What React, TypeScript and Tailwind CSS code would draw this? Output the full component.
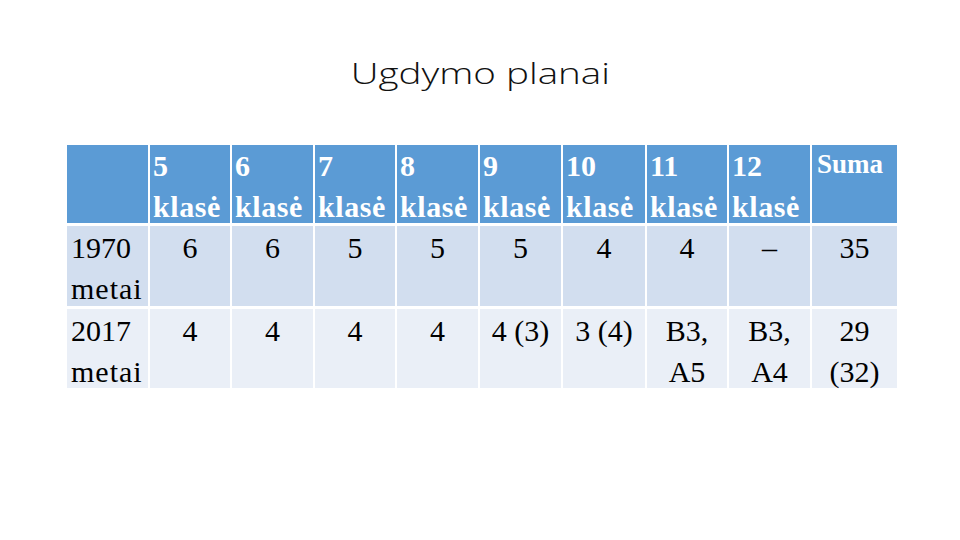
import React from "react";

const serif = { fontFamily: '"Liberation Serif", "Times New Roman", serif' };

const classes = ["5", "6", "7", "8", "9", "10", "11", "12"];
const row1 = ["6", "6", "5", "5", "5", "4", "4", "–", "35"];
const row2: string[][] = [["4"], ["4"], ["4"], ["4"], ["4 (3)"], ["3 (4)"], ["B3,", "A5"], ["B3,", "A4"], ["29", "(32)"]];

export default function App() {
  return (
    <div className="w-[960px] h-[540px] bg-white relative overflow-hidden">
      <div className="pt-[53px] h-[145px] flex justify-center">
        <h1
          className="text-[29px] font-light text-[#111] leading-[40px] scale-x-[1.33]"
          style={{ fontFamily: '"Open Sans", Lato, sans-serif' }}
        >
          Ugdymo planai
        </h1>
      </div>
      <div
        className="ml-[67px] grid grid-cols-[81px_80px_81px_80px_81px_81px_82px_80px_81px_85px] grid-rows-[78px_80px_79px] gap-x-[2px] gap-y-[3px] text-black"
        style={serif}
      >
        <div className="bg-[#5b9bd5]" />
        {classes.map((c) => (
          <div key={c} className="bg-[#5b9bd5] pl-[3px] pt-[0px] text-white font-bold text-[30px] leading-[41px] whitespace-nowrap">
            <div>{c}</div>
            <div className="tracking-[0.6px]">klasė</div>
          </div>
        ))}
        <div className="bg-[#5b9bd5] pl-[5px] pt-[0px] text-white font-bold text-[27px] leading-[38px]">Suma</div>

        <div className="bg-[#d2deef] pl-[4px] pt-[1px] text-[30px] leading-[41px]">
          <div>1970</div>
          <div className="tracking-[1px]">metai</div>
        </div>
        {row1.map((v, i) => (
          <div key={i} className="bg-[#d2deef] pt-[1px] text-[30px] leading-[41px] text-center">
            {v}
          </div>
        ))}

        <div className="bg-[#eaeff7] pl-[4px] pt-[1px] text-[30px] leading-[41px]">
          <div>2017</div>
          <div className="tracking-[1px]">metai</div>
        </div>
        {row2.map((lines, i) => (
          <div key={i} className="bg-[#eaeff7] pt-[1px] text-[30px] leading-[41px] text-center whitespace-nowrap">
            {lines.map((l, j) => (
              <div key={j}>{l}</div>
            ))}
          </div>
        ))}
      </div>
    </div>
  );
}
